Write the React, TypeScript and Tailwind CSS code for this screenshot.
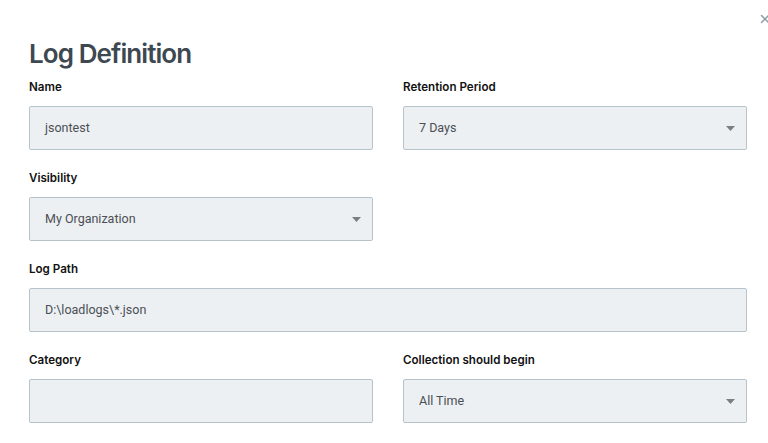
import { X } from 'lucide-react'

function Field({ label, children, className = '' }: { label: string; children: React.ReactNode; className?: string }) {
  return (
    <div className={className}>
      <div className="h-[19px] pt-[1px] text-[11.6px] font-semibold leading-[19px] text-[#111]">{label}</div>
      <div className="mt-[10px]">{children}</div>
    </div>
  )
}

function TextBox({ value }: { value?: string }) {
  return (
    <div className="flex h-[44px] items-center rounded-[2px] border border-[#b7c3cb] bg-[#edf0f3] px-[15px] font-['Roboto',sans-serif] text-[12.5px] text-[#4a4f54]">
      {value}
    </div>
  )
}

function SelectBox({ value }: { value: string }) {
  return (
    <div className="flex h-[44px] items-center justify-between rounded-[2px] border border-[#b7c3cb] bg-[#edf0f3] pl-[15px] pr-[11px] font-['Roboto',sans-serif] text-[12.5px] text-[#4a4f54]">
      <span>{value}</span>
      <svg width="9" height="5" viewBox="0 0 9 5">
        <path d="M0 0h9L4.5 5z" fill="#7a7f84" />
      </svg>
    </div>
  )
}

export default function App() {
  return (
    <div className="relative h-[443px] w-[768px] overflow-hidden bg-white font-['Inter',sans-serif]">
      <button className="absolute right-[-4px] top-[12px] text-[#8d9ba4]">
        <X size={14} strokeWidth={2.5} />
      </button>
      <div className="pl-[29px] pr-[21px] pt-[37px]">
        <h1 className="text-[26px] font-semibold leading-[34px] tracking-[-0.035em] text-[#3d4850]">Log Definition</h1>
        <div className="mt-[6px] grid grid-cols-2 gap-x-[30px] gap-y-[18px]">
          <Field label="Name">
            <TextBox value="jsontest" />
          </Field>
          <Field label="Retention Period">
            <SelectBox value="7 Days" />
          </Field>
          <Field label="Visibility">
            <SelectBox value="My Organization" />
          </Field>
          <div />
          <Field label="Log Path" className="col-span-2">
            <TextBox value="D:\loadlogs\*.json" />
          </Field>
          <Field label="Category">
            <TextBox />
          </Field>
          <Field label="Collection should begin">
            <SelectBox value="All Time" />
          </Field>
        </div>
      </div>
    </div>
  )
}
